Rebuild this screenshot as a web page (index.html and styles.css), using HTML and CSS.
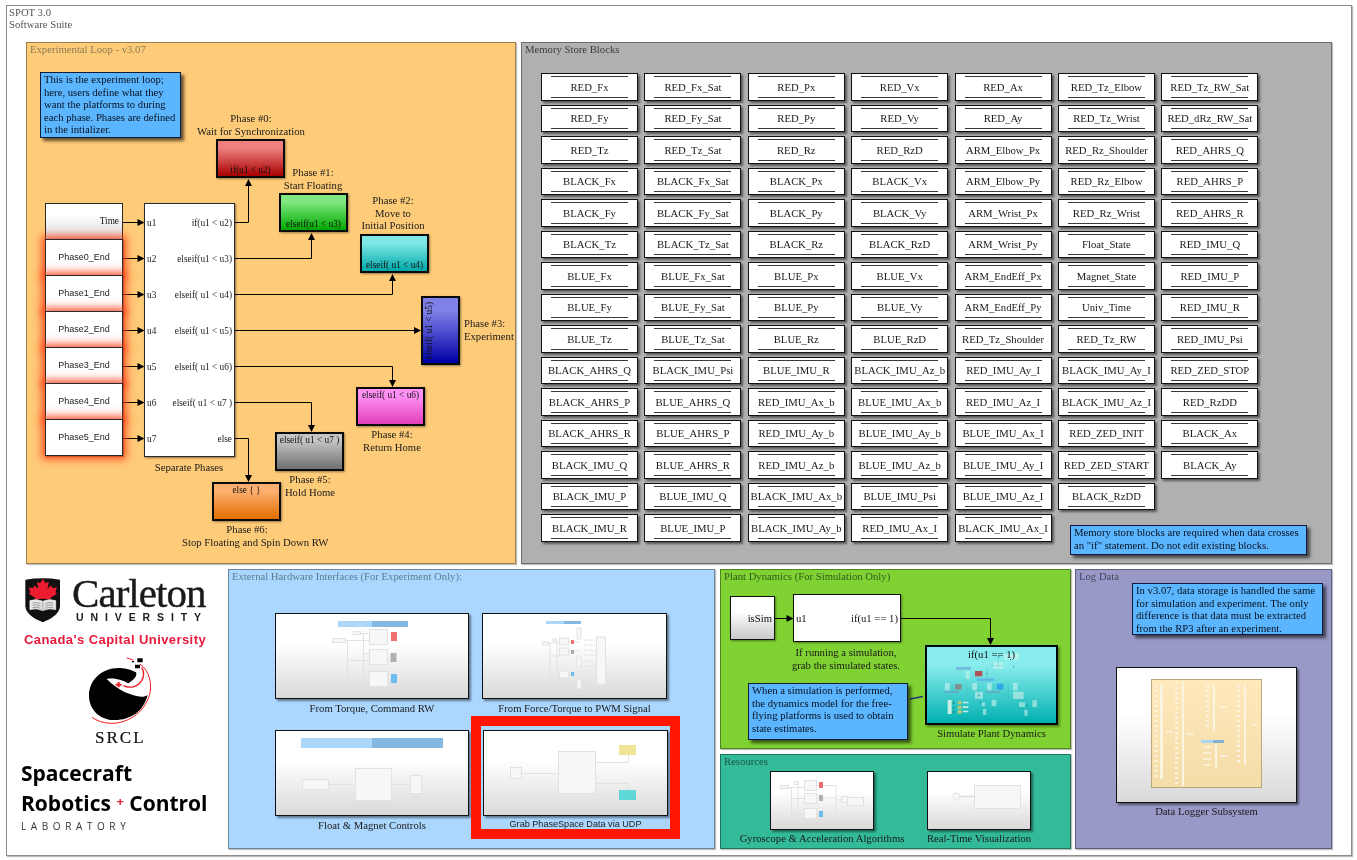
FILE: index.html
```html
<!DOCTYPE html>
<html lang="en">
<head>
<meta charset="utf-8">
<title>SPOT 3.0 Software Suite</title>
<link rel="stylesheet" href="styles.css">
</head>
<body>
<div class="frame">
  <div class="suite-title">SPOT 3.0<br>Software Suite</div>

  <div class="row-top">
    <section class="panel loop">
      <div class="ptitle">Experimental Loop - v3.07</div>
      <svg class="wires" width="490" height="522" viewBox="0 0 490 522">
        <g transform="translate(-26 -42)">
          <path class="wire" d="M122 222.5H138M122 258.5H138M122 294.5H138M122 330.5H138M122 366.5H138M122 402.5H138M122 438.5H138"/>
          <path class="arrow" d="M144.500 222.500l-7-3.500v7zM144.500 258.500l-7-3.500v7zM144.500 294.500l-7-3.500v7zM144.500 330.500l-7-3.500v7zM144.500 366.500l-7-3.500v7zM144.500 402.500l-7-3.500v7zM144.500 438.500l-7-3.500v7z"/>
          <path class="wire" d="M235 222.500H248.500V185M235 258.500H311.500V239M235 294.500H392.500V280M235 330.500H415M235 366.500H392.500V381M235 402.500H311.500V426M235 438.500H248.500V476"/>
          <path class="arrow" d="M248.500 179l-3.500 7h7zM311.500 233l-3.500 7h7zM392.500 274l-3.500 7h7zM421 330.500l-7-3.500v7zM392.500 387l-3.500-7h7zM311.500 432l-3.500-7h7zM248.500 482l-3.500-7h7z"/>
        </g>
      </svg>

      <div class="note note-loop">This is the experiment loop;<br>here, users define what they<br>want the platforms to during<br>each phase. Phases are defined<br>in the intializer.</div>

      <div class="stack">
        <div class="inport inport-time">Time</div>
        <div class="inport inport-phase">Phase0_End</div>
        <div class="inport inport-phase">Phase1_End</div>
        <div class="inport inport-phase">Phase2_End</div>
        <div class="inport inport-phase">Phase3_End</div>
        <div class="inport inport-phase">Phase4_End</div>
        <div class="inport inport-phase">Phase5_End</div>
      </div>

      <div class="ifblock">
        <div class="port"><span>u1</span><span>if(u1 &lt; u2)</span></div>
        <div class="port"><span>u2</span><span>elseif(u1 &lt; u3)</span></div>
        <div class="port"><span>u3</span><span>elseif( u1 &lt; u4)</span></div>
        <div class="port"><span>u4</span><span>elseif( u1 &lt; u5)</span></div>
        <div class="port"><span>u5</span><span>elseif( u1 &lt; u6)</span></div>
        <div class="port"><span>u6</span><span>elseif( u1 &lt; u7 )</span></div>
        <div class="port"><span>u7</span><span>else</span></div>
      </div>
      <div class="lbl l-sep">Separate Phases</div>

      <div class="lbl l0">Phase #0:<br>Wait for Synchronization</div>
      <div class="sub sub-bottom p0">if(u1 &lt; u2)</div>
      <div class="lbl l1">Phase #1:<br>Start Floating</div>
      <div class="sub sub-bottom p1">elseif(u1 &lt; u3)</div>
      <div class="lbl l2">Phase #2:<br>Move to<br>Initial Position</div>
      <div class="sub sub-bottom p2">elseif( u1 &lt; u4)</div>
      <div class="sub p3"><span class="vtext">elseif( u1 &lt; u5)</span></div>
      <div class="lbl l3">Phase #3:<br>Experiment</div>
      <div class="sub sub-top p4">elseif( u1 &lt; u6)</div>
      <div class="lbl l4">Phase #4:<br>Return Home</div>
      <div class="sub sub-top p5">elseif( u1 &lt; u7 )</div>
      <div class="lbl l5">Phase #5:<br>Hold Home</div>
      <div class="sub sub-top p6">else { }</div>
      <div class="lbl l6">Phase #6:<br>Stop Floating and Spin Down RW</div>
    </section>

    <section class="panel memory">
      <div class="ptitle">Memory Store Blocks</div>
      <div class="ds-grid">
        <div class="ds">RED_Fx</div><div class="ds">RED_Fy</div><div class="ds">RED_Tz</div><div class="ds">BLACK_Fx</div><div class="ds">BLACK_Fy</div><div class="ds">BLACK_Tz</div><div class="ds">BLUE_Fx</div><div class="ds">BLUE_Fy</div><div class="ds">BLUE_Tz</div><div class="ds">BLACK_AHRS_Q</div><div class="ds">BLACK_AHRS_P</div><div class="ds">BLACK_AHRS_R</div><div class="ds">BLACK_IMU_Q</div><div class="ds">BLACK_IMU_P</div><div class="ds">BLACK_IMU_R</div>
        <div class="ds">RED_Fx_Sat</div><div class="ds">RED_Fy_Sat</div><div class="ds">RED_Tz_Sat</div><div class="ds">BLACK_Fx_Sat</div><div class="ds">BLACK_Fy_Sat</div><div class="ds">BLACK_Tz_Sat</div><div class="ds">BLUE_Fx_Sat</div><div class="ds">BLUE_Fy_Sat</div><div class="ds">BLUE_Tz_Sat</div><div class="ds">BLACK_IMU_Psi</div><div class="ds">BLUE_AHRS_Q</div><div class="ds">BLUE_AHRS_P</div><div class="ds">BLUE_AHRS_R</div><div class="ds">BLUE_IMU_Q</div><div class="ds">BLUE_IMU_P</div>
        <div class="ds">RED_Px</div><div class="ds">RED_Py</div><div class="ds">RED_Rz</div><div class="ds">BLACK_Px</div><div class="ds">BLACK_Py</div><div class="ds">BLACK_Rz</div><div class="ds">BLUE_Px</div><div class="ds">BLUE_Py</div><div class="ds">BLUE_Rz</div><div class="ds">BLUE_IMU_R</div><div class="ds">RED_IMU_Ax_b</div><div class="ds">RED_IMU_Ay_b</div><div class="ds">RED_IMU_Az_b</div><div class="ds">BLACK_IMU_Ax_b</div><div class="ds">BLACK_IMU_Ay_b</div>
        <div class="ds">RED_Vx</div><div class="ds">RED_Vy</div><div class="ds">RED_RzD</div><div class="ds">BLACK_Vx</div><div class="ds">BLACK_Vy</div><div class="ds">BLACK_RzD</div><div class="ds">BLUE_Vx</div><div class="ds">BLUE_Vy</div><div class="ds">BLUE_RzD</div><div class="ds">BLACK_IMU_Az_b</div><div class="ds">BLUE_IMU_Ax_b</div><div class="ds">BLUE_IMU_Ay_b</div><div class="ds">BLUE_IMU_Az_b</div><div class="ds">BLUE_IMU_Psi</div><div class="ds">RED_IMU_Ax_I</div>
        <div class="ds">RED_Ax</div><div class="ds">RED_Ay</div><div class="ds">ARM_Elbow_Px</div><div class="ds">ARM_Elbow_Py</div><div class="ds">ARM_Wrist_Px</div><div class="ds">ARM_Wrist_Py</div><div class="ds">ARM_EndEff_Px</div><div class="ds">ARM_EndEff_Py</div><div class="ds">RED_Tz_Shoulder</div><div class="ds">RED_IMU_Ay_I</div><div class="ds">RED_IMU_Az_I</div><div class="ds">BLUE_IMU_Ax_I</div><div class="ds">BLUE_IMU_Ay_I</div><div class="ds">BLUE_IMU_Az_I</div><div class="ds">BLACK_IMU_Ax_I</div>
        <div class="ds">RED_Tz_Elbow</div><div class="ds">RED_Tz_Wrist</div><div class="ds">RED_Rz_Shoulder</div><div class="ds">RED_Rz_Elbow</div><div class="ds">RED_Rz_Wrist</div><div class="ds">Float_State</div><div class="ds">Magnet_State</div><div class="ds">Univ_Time</div><div class="ds">RED_Tz_RW</div><div class="ds">BLACK_IMU_Ay_I</div><div class="ds">BLACK_IMU_Az_I</div><div class="ds">RED_ZED_INIT</div><div class="ds">RED_ZED_START</div><div class="ds">BLACK_RzDD</div><div class="ds-empty"></div>
        <div class="ds">RED_Tz_RW_Sat</div><div class="ds">RED_dRz_RW_Sat</div><div class="ds">RED_AHRS_Q</div><div class="ds">RED_AHRS_P</div><div class="ds">RED_AHRS_R</div><div class="ds">RED_IMU_Q</div><div class="ds">RED_IMU_P</div><div class="ds">RED_IMU_R</div><div class="ds">RED_IMU_Psi</div><div class="ds">RED_ZED_STOP</div><div class="ds">RED_RzDD</div><div class="ds">BLACK_Ax</div><div class="ds">BLACK_Ay</div>
      </div>
      <div class="note note-memory">Memory store blocks are required when data crosses<br>an "if" statement. Do not edit existing blocks.</div>
    </section>
  </div>

  <div class="row-bottom">
    <div class="logos">
      <div class="carleton">
        <svg class="shield" width="37" height="46" viewBox="10 12 112 138">
          <path fill="#111" d="M14 20Q66 11 119 20V100Q116 130 67 148Q17 130 14 100Z"/>
          <path fill="#ed1c2e" d="M67 17L75 30L85 26L81 47L92 37L96 45L110 43L105 58L110 62L90 74L92 80L70 77L64 77L42 80L44 74L24 62L29 58L24 43L38 45L42 37L53 47L49 26L59 30Z"/>
          <path fill="#e4e4e4" stroke="#fff" stroke-width="2" d="M28 83Q48 76 67 85Q86 76 106 83V110Q86 104 67 113Q48 104 28 110Z"/>
          <path fill="none" stroke="#777" stroke-width="2" d="M67 85V112M36 90Q50 87 60 92M36 97Q50 94 60 99M36 104Q50 101 60 106M74 92Q84 87 98 90M74 99Q84 94 98 97M74 106Q84 101 98 104"/>
        </svg>
        <div class="wordmark">
          <div class="carleton-word">Carleton</div>
          <div class="university-word">UNIVERSITY</div>
        </div>
      </div>
      <div class="capital">Canada's Capital University</div>
      <svg class="srcl-mark" width="80" height="70" viewBox="0 0 240 210">
        <path fill="#000" d="M115 42C70 42 27 75 27 125C27 170 65 200 105 198C150 197 190 175 203 122C190 135 160 125 135 115C115 105 95 90 80 75C105 70 130 80 145 88C165 75 172 65 168 55C150 45 130 42 115 42Z"/>
        <path fill="none" stroke="#ed1c24" stroke-width="3" d="M36 190C50 200 70 208 95 208C140 208 190 180 208 125C218 90 208 50 180 30M160 18L140 12"/>
        <path fill="none" stroke="#ed1c24" stroke-width="4" d="M130 95C150 104 172 100 185 80C192 68 192 52 185 40"/>
        <path fill="#ed1c24" d="M113 84h6v5h6v6h-6v5h-6v-5h-6v-6h6z"/>
        <path fill="#000" d="M172 13h16v12h-16zM165 32h15v11h-15zM156 21h6v4h-6z"/>
      </svg>
      <div class="srcl-word">SRCL</div>
      <div class="lab-line lab-first">Spacecraft</div>
      <div class="lab-line">Robotics <span class="lab-plus">+</span> Control</div>
      <div class="lab-sub">LABORATORY</div>
    </div>

    <section class="panel hardware">
      <div class="ptitle">External Hardware Interfaces (For Experiment Only):</div>

      <figure class="fig f-torque">
        <div class="thumb thumb-hw">
          <svg class="thumb-art" width="194" height="86" viewBox="0 0 194 86">
            <path fill="#abd7fb" d="M63 8h34v6h-34z"/><path fill="#85b8e0" d="M97 8h36v6h-36z"/>
            <path class="ln" d="M70 27.500H94M72.500 27.500V69.500H94M72.500 47.500H94M88.500 20V62M85 20.500H94M88 40.500H94M88 62.500H94"/>
            <rect class="pale" x="57.500" y="25.500" width="13" height="4"/><rect class="pale" x="78.500" y="18.500" width="7" height="3"/>
            <rect class="pale" x="94.500" y="16.500" width="18" height="15"/><rect class="pale" x="94.500" y="36.500" width="18" height="15"/><rect class="pale" x="94.500" y="58.500" width="18" height="15"/>
            <path fill="#f07070" d="M116 19h6v9h-6z"/><path fill="#b0b0b0" d="M115.500 40h6v9h-6z"/><path fill="#70bcf0" d="M116 61h6v9h-6z"/>
          </svg>
        </div>
        <figcaption class="cap">From Torque, Command RW</figcaption>
      </figure>

      <figure class="fig f-pwm">
        <div class="thumb thumb-hw">
          <svg class="thumb-art" width="185" height="86" viewBox="0 0 185 86">
            <path fill="#abd7fb" d="M64 8h18v3h-18z"/><path fill="#85b8e0" d="M82 8h17v3h-17z"/>
            <path class="ln" d="M67 30H78M68 30.500V63H78M67.500 43H78M75 27V59H78M87 29H97M87 38H97M87 60H97"/>
            <rect class="pale" x="60.500" y="29" width="6" height="3"/><rect class="pale" x="70.500" y="26" width="4" height="2"/>
            <rect class="pale" x="77.500" y="25" width="9" height="7"/><rect class="pale" x="77.500" y="35" width="9" height="7"/><rect class="pale" x="77.500" y="58" width="9" height="7"/>
            <rect class="pale" x="114.500" y="24" width="9" height="47"/>
            <path fill="#f07070" d="M89 27h3v4h-3z"/><path fill="#aaa" d="M89 37h3v4h-3z"/><path fill="#70bcf0" d="M89 59h3v4h-3z"/>
            <path class="dash" d="M102 27H115M102 32H115M102 37H115M102 42H115M102 48H115M102 53H115M102 58H115M102 63H115M102 68H115"/>
            <path class="pale" d="M95 15h4v11h-4zM95 43h4v11h-4zM95 66h4v10h-4z"/>
          </svg>
        </div>
        <figcaption class="cap">From Force/Torque to PWM Signal</figcaption>
      </figure>

      <figure class="fig f-float">
        <div class="thumb thumb-hw">
          <svg class="thumb-art" width="194" height="86" viewBox="0 0 194 86">
            <path fill="#abd7fb" d="M26 8h71v10h-71z"/><path fill="#85b8e0" d="M97 8h71v10h-71z"/>
            <path class="ln" d="M53 54.500H80M116 54.500H135"/>
            <rect class="pale" x="27.500" y="49.500" width="26" height="10"/>
            <rect class="pale" x="80.500" y="38.500" width="36" height="32"/>
            <rect class="pale" x="135.500" y="45.500" width="11" height="18"/>
          </svg>
        </div>
        <figcaption class="cap">Float &amp; Magnet Controls</figcaption>
      </figure>

      <figure class="fig f-udp">
        <div class="thumb thumb-hw">
          <svg class="thumb-art" width="185" height="86" viewBox="0 0 185 86">
            <path class="ln" d="M38 43.500H75M113 32.500H145.500V25M113 53.500H145.500V60"/>
            <rect class="pale" x="27.500" y="37.500" width="11" height="11"/>
            <rect class="pale" x="75.500" y="21.500" width="37" height="42"/>
            <path fill="#f0e498" d="M136 15h17v10h-17z"/><path fill="#60d8d8" d="M136 60h17v10h-17z"/>
          </svg>
        </div>
        <figcaption class="cap cap-sans">Grab PhaseSpace Data via UDP</figcaption>
      </figure>
      <div class="highlight"></div>
    </section>

    <div class="middle">
      <section class="panel plant">
        <div class="ptitle">Plant Dynamics (For Simulation Only)</div>
        <div class="issim">isSim</div>
        <div class="ifsim"><span>u1</span><span>if(u1 == 1)</span></div>
        <div class="lbl l-ifsim">If running a simulation,<br>grab the simulated states.</div>
        <figure class="fig f-sim">
          <div class="simblock">
            <svg class="thumb-art sim-art" width="133" height="80" viewBox="0 0 399 240">
              <g transform="translate(-3 -3)">
                <path fill="#b05050" d="M150 78h22v16h-22z"/><path fill="#809090" d="M90 117h20v17h-20z"/><path fill="#30a8e8" d="M215 116h20v18h-20z"/>
                <path fill="#70bcdf" d="M92 66h46v8h-46z"/><path fill="#60b8e8" d="M155 100h52v8h-52z"/><path fill="#60b0c8" d="M58 138h44v6h-44zM182 138h44v6h-44z"/>
                <path class="sim-pale" d="M122 78h12v24h-12zM60 114h14v22h-14zM142 114h14v22h-14zM186 114h14v22h-14zM264 114h14v22h-14zM150 140h24v22h-24zM264 140h32v22h-32zM238 28h36v16h-36zM206 52h28v20h-28zM270 24h12v20h-12zM200 164h14v20h-14zM170 172h10v12h-10zM282 172h18v14h-18zM322 166h14v20h-14zM298 194h10v18h-10zM174 192h10v18h-10z"/>
                <path fill="#c8f0e8" d="M68 165h12v42h-12zM114 170h16v5h-16zM114 184h16v5h-16zM114 197h16v5h-16z"/>
                <path fill="#b0c878" d="M98 168h12v10h-12zM98 182h12v10h-12zM98 195h12v11h-12z"/>
                <path fill="#1a6a70" d="M84 172h4v4h-4zM84 186h4v4h-4zM84 199h4v4h-4zM160 150h3v3h-3zM165 172h3v3h-3zM220 34h3v3h-3zM255 42h3v3h-3zM184 84h3v3h-3zM304 180h3v3h-3zM264 64h3v3h-3z"/>
                <path class="sim-ln" d="M160 128V172M220 34V72M126 124V152M250 118V156M310 180V212M192 62H234M186 62V100M82 118V140M206 118V138"/>
              </g>
            </svg>
            <span class="sim-text">if(u1 == 1)</span>
          </div>
          <figcaption class="cap cap-sim">Simulate Plant Dynamics</figcaption>
        </figure>
        <svg class="wires" width="351" height="180" viewBox="0 0 351 180">
          <g transform="translate(-720 -569)">
            <path class="wire" d="M775 618.500H787M901 618.500H990.500V639"/>
            <path class="arrow" d="M793.500 618.500l-7-3.500v7zM990.500 645l-3.500-7h7z"/>
            <path class="tie" d="M910 699L923 696.500"/>
          </g>
        </svg>
        <div class="note note-plant">When a simulation is performed,<br>the dynamics model for the free-<br>flying platforms is used to obtain<br>state estimates.</div>
      </section>

      <section class="panel resources">
        <div class="ptitle">Resources</div>
        <figure class="fig f-gyro">
          <div class="thumb thumb-res">
            <svg class="thumb-art" width="104" height="59" viewBox="0 0 104 59">
              <path class="ln" d="M19 16.500H34M21.500 16V43.500H34M21.500 27.500H34M28 12V40M47 14.500H66V40M47 27H66M47 43.500H66M66 29H76"/>
              <rect class="pale" x="10.500" y="14.500" width="8" height="3"/><rect class="pale" x="24.500" y="10.500" width="4" height="3"/>
              <rect class="pale" x="34.500" y="9.500" width="12" height="10"/><rect class="pale" x="34.500" y="22.500" width="12" height="10"/><rect class="pale" x="34.500" y="37.500" width="12" height="10"/>
              <path fill="#e87070" d="M49 11h4v6h-4z"/><path fill="#b0b0b0" d="M49 24h4v6h-4z"/><path fill="#70bcf0" d="M49 40h4v6h-4z"/>
              <rect class="pale" x="71.500" y="25.500" width="6" height="6"/><rect class="pale" x="77.500" y="26.500" width="16" height="8"/>
            </svg>
          </div>
          <figcaption class="cap cap-res">Gyroscope &amp; Acceleration Algorithms</figcaption>
        </figure>
        <figure class="fig f-rt">
          <div class="thumb thumb-res">
            <svg class="thumb-art" width="104" height="59" viewBox="0 0 104 59">
              <path d="M33 25.500H48" stroke="#ddd" stroke-width="1.500"/>
              <circle class="pale" cx="29.500" cy="25.500" r="3.500"/>
              <rect class="pale" x="47.500" y="14.500" width="46" height="23"/>
            </svg>
          </div>
          <figcaption class="cap cap-res">Real-Time Visualization</figcaption>
        </figure>
      </section>
    </div>

    <section class="panel logdata">
      <div class="ptitle">Log Data</div>
      <div class="note note-log">In v3.07, data storage is handled the same<br>for simulation and experiment. The only<br>difference is that data must be extracted<br>from the RP3 after an experiment.</div>
      <figure class="fig f-logger">
        <div class="thumb thumb-log">
          <svg class="thumb-art" width="181" height="136" viewBox="0 0 181 136">
            <defs>
              <linearGradient id="tan" x1="0" y1="0" x2="0" y2="1"><stop offset="0" stop-color="#ffe9bd"/><stop offset="1" stop-color="#f3dca6"/></linearGradient>
            </defs>
            <rect x="35.500" y="12.500" width="110" height="108" fill="url(#tan)" stroke="#b8a880"/>
            <path fill="#fbf4e0" d="M44 18h3v94h-3zM66 15h2v104h-2zM97 18h2v46h-2zM128 18h2v80h-2zM99 77h2v24h-2z"/>
            <path class="tan-dash" d="M40 18V112M60.500 15V119M91.500 18V64M122.500 18V98"/>
            <path class="tan-out" d="M50 65H57M70 67H78M104 40H111M104 89H111M135 58H142M87 80H95M87 86H95M87 92H95M87 98H95"/>
            <path fill="#a8d5f0" d="M85 73h12v3h-12z"/><path fill="#85b0d0" d="M97 73h11v3h-11z"/>
          </svg>
        </div>
        <figcaption class="cap cap-log">Data Logger Subsystem</figcaption>
      </figure>
    </section>
  </div>
</div>
</body>
</html>
```

FILE: styles.css
```css
* { box-sizing: border-box; }

html, body { margin: 0; padding: 0; background: #fff; }

body {
  width: 1357px;
  height: 860px;
  overflow: hidden;
  font-family: "Liberation Serif", "Times New Roman", serif;
  font-size: 10.7px;
  line-height: 12.7px;
  color: #111;
}

.frame {
  margin: 5px 0 0 6px;
  width: 1346px;
  height: 851px;
  border: 1px solid #8c8c8c;
  box-shadow: 1px 1px 1px #bbb;
  display: grid;
  grid-template-rows: 31px 522px 280px;
  row-gap: 5px;
  padding-left: 19px;
  filter: blur(0.35px);
}

.suite-title { margin-left: -19px; padding-left: 2px; line-height: 12px; color: #555; }

.row-top { display: flex; gap: 5px; }
.row-bottom { display: flex; }

.panel {
  position: relative;
  box-shadow: inset 0 0 0 1px rgba(0, 0, 0, 0.38), 1px 1px 1px rgba(0, 0, 0, 0.25);
}
.ptitle { padding: 1px 0 0 4px; white-space: nowrap; }

.loop { width: 490px; background: #fecb78; }
.loop .ptitle { color: #8c7a52; }
.memory { width: 811px; background: #b0b0b0; }
.memory .ptitle { color: #3c3c3c; }
.hardware { width: 487px; margin-left: 5px; background: #abd7ff; }
.hardware .ptitle { color: #5c7c94; }
.middle { width: 351px; margin-left: 5px; display: flex; flex-direction: column; gap: 5px; }
.plant { height: 180px; background: #80d132; }
.plant .ptitle { color: #2f5c1c; }
.resources { height: 95px; background: #33bb99; }
.resources .ptitle { color: #1c5646; }
.logdata { width: 257px; margin-left: 4px; background: #9999c8; }
.logdata .ptitle { color: #454560; }

/* wiring */
.wires { position: absolute; left: 0; top: 0; pointer-events: none; }
.wire { fill: none; stroke: #000; stroke-width: 1; }
.arrow { fill: #000; }
.tie { fill: none; stroke: #24337a; stroke-width: 1.5; }

/* notes */
.note {
  position: absolute;
  background: #5cb6ff;
  border: 1px solid #0c1c3a;
  box-shadow: 3px 3px 3px rgba(0, 0, 0, 0.6);
  padding: 0 3px;
  line-height: 12.6px;
  white-space: nowrap;
  color: #06101e;
}
.note-loop { left: 14px; top: 30px; width: 141px; height: 66px; }
.note-memory { left: 549px; top: 483px; width: 237px; height: 30px; }
.note-plant { left: 28px; top: 114px; width: 160px; height: 57px; }
.note-log { left: 57px; top: 14px; width: 191px; height: 52px; }

/* free text labels of the diagram */
.lbl { position: absolute; width: 130px; text-align: center; white-space: nowrap; color: #1a1a1a; }
.l0 { left: 160px; top: 70px; }
.l1 { left: 222px; top: 124px; }
.l2 { left: 302px; top: 152px; }
.l3 { left: 438px; top: 275px; width: 60px; text-align: left; }
.l4 { left: 301px; top: 386px; }
.l5 { left: 219px; top: 431px; }
.l6 { left: 156px; top: 481px; width: 130px; }
.l-sep { left: 98px; top: 419px; }
.l-ifsim { left: 61px; top: 77px; }

/* left inports */
.stack { position: absolute; left: 19px; top: 161px; width: 78px; display: flex; flex-direction: column; }
.inport {
  height: 37px;
  margin-bottom: -1px;
  border: 1px solid #2a2a2a;
  background: #fff;
  display: flex;
  align-items: center;
}
.inport-time {
  justify-content: flex-end;
  padding: 0 3px 0 0;
  font-size: 9.3px;
  background: linear-gradient(#fff 30%, #dcdcdc 100%);
}
.inport-phase {
  justify-content: center;
  font-family: "Liberation Sans", Arial, sans-serif;
  font-size: 9px;
  color: #222;
  padding-bottom: 1px;
  box-shadow: 0 0 8px 3px rgba(255, 55, 20, 0.85), 1px 1px 1px rgba(0, 0, 0, 0.4);
}

/* if block */
.ifblock {
  position: absolute;
  left: 118px;
  top: 161px;
  width: 91px;
  height: 254px;
  padding-top: 1px;
  background: #fff;
  border: 1px solid #2a2a2a;
  box-shadow: 1px 1px 2px rgba(0, 0, 0, 0.45);
  font-size: 9.3px;
  color: #222;
}
.port { height: 36px; display: flex; align-items: center; justify-content: space-between; padding: 0 2px; white-space: nowrap; }

/* phase subsystems */
.sub {
  position: absolute;
  width: 69px;
  height: 39px;
  border: 2px solid #0a0a0a;
  box-shadow: 1px 1px 2px rgba(0, 0, 0, 0.4);
  display: flex;
  justify-content: center;
  font-size: 9.3px;
  white-space: nowrap;
  color: #111;
}
.sub-bottom { align-items: flex-end; line-height: 11px; }
.sub-top { align-items: flex-start; }
.p0 { left: 190px; top: 97px; background: linear-gradient(#f08080 20%, #a80000 100%); }
.p1 { left: 253px; top: 151px; background: linear-gradient(#80e880 20%, #00a800 100%); }
.p2 { left: 334px; top: 192px; background: linear-gradient(#80e8e8 20%, #00a8a8 100%); }
.p3 {
  left: 395px;
  top: 254px;
  width: 39px;
  height: 69px;
  justify-content: flex-start;
  align-items: center;
  background: linear-gradient(#8080e8 20%, #0000a8 100%);
}
.p4 { left: 330px; top: 345px; background: linear-gradient(#ff90f4 20%, #e040b8 100%); }
.p5 { left: 249px; top: 390px; background: linear-gradient(#c4c4c4 20%, #707070 100%); }
.p6 { left: 186px; top: 440px; background: linear-gradient(#ffb070 20%, #e06e00 100%); }
.vtext { writing-mode: vertical-rl; transform: rotate(180deg); }

/* memory store blocks */
.ds-grid {
  margin: 17.3px 0 0 20px;
  display: grid;
  grid-template-rows: repeat(15, 27.5px);
  grid-auto-flow: column;
  grid-auto-columns: 97px;
  column-gap: 6.4px;
  row-gap: 4px;
}
.ds {
  position: relative;
  display: flex;
  align-items: center;
  justify-content: center;
  padding-top: 1px;
  background: #fff;
  border: 1px solid #111;
  box-shadow: 2px 2px 2px rgba(0, 0, 0, 0.5);
  white-space: nowrap;
  color: #1a1a1a;
}
.ds::before,
.ds::after {
  content: "";
  position: absolute;
  left: 9px;
  right: 9px;
  height: 1px;
  background: #3a3a3a;
}
.ds::before { top: 2px; }
.ds::after { bottom: 2px; }

/* thumbnails */
.fig { position: absolute; margin: 0; display: flex; flex-direction: column; align-items: center; }
.thumb {
  position: relative;
  width: 100%;
  border: 1px solid #111;
  background: linear-gradient(#fff 35%, #d9d9d9 100%);
  box-shadow: 2px 2px 2px rgba(0, 0, 0, 0.45);
}
.thumb-hw { height: 86px; }
.thumb-res { height: 59px; }
.thumb-log { height: 136px; }
.thumb-art { position: absolute; left: -1px; top: -1px; }
.pale { fill: #f7f7f7; stroke: #e2e2e2; stroke-width: 1; }
.ln { fill: none; stroke: #e2e2e2; stroke-width: 1; }
.dash { fill: none; stroke: #e4e4e4; stroke-width: 1; stroke-dasharray: 4 1; }
.cap { margin-top: 3px; white-space: nowrap; color: #1a1a1a; }
.cap-sans { font-family: "Liberation Sans", Arial, sans-serif; font-size: 9.1px; margin-top: 2px; }
.cap-sim { margin-top: 1.5px; }
.cap-res { margin-top: 2px; }
.cap-log { margin-top: 2px; }
.f-torque { left: 47px; top: 44px; width: 194px; }
.f-pwm { left: 254px; top: 44px; width: 185px; }
.f-float { left: 47px; top: 161px; width: 194px; }
.f-udp { left: 255px; top: 161px; width: 185px; }
.f-sim { left: 205px; top: 76px; width: 133px; }
.f-gyro { left: 50px; top: 17px; width: 104px; }
.f-rt { left: 207px; top: 17px; width: 104px; }
.f-logger { left: 41px; top: 98px; width: 181px; }
.highlight { position: absolute; left: 243px; top: 147px; width: 209px; height: 123px; border: 10px solid #ff1500; }

/* plant blocks */
.issim {
  position: absolute;
  left: 10px;
  top: 27px;
  width: 45px;
  height: 44px;
  border: 1px solid #111;
  background: linear-gradient(#fff 35%, #c8c8c8 100%);
  box-shadow: 1px 1px 2px rgba(0, 0, 0, 0.4);
  display: flex;
  align-items: center;
  justify-content: flex-end;
  padding-right: 2px;
}
.ifsim {
  position: absolute;
  left: 73px;
  top: 25px;
  width: 108px;
  height: 48px;
  border: 1px solid #111;
  background: #fff;
  box-shadow: 1px 1px 2px rgba(0, 0, 0, 0.4);
  display: flex;
  align-items: center;
  justify-content: space-between;
  padding: 0 2px;
}
.simblock {
  position: relative;
  width: 133px;
  height: 80px;
  border: 2px solid #050505;
  background: linear-gradient(#88ecec 25%, #00b0b0 100%);
  box-shadow: 2px 2px 2px rgba(0, 0, 0, 0.35);
  display: flex;
  justify-content: center;
}
.sim-text { position: relative; padding-top: 1px; }
.sim-pale { fill: #d8f4ee; fill-opacity: 0.55; }
.sim-ln { fill: none; stroke: #3aa0a0; stroke-width: 1; stroke-opacity: 0.7; }

/* data logger art */
.tan-dash { fill: none; stroke: #fbf4e0; stroke-width: 3; stroke-dasharray: 2 3; }
.tan-out { fill: none; stroke: #fbf4e0; stroke-width: 1.5; }

/* logos */
.logos { width: 197px; position: relative; }
.carleton { display: flex; gap: 11px; margin: 7px 0 0 -2px; }
.shield { flex: none; margin-top: 1px; }
.wordmark { display: flex; flex-direction: column; margin-top: -1px; }
.carleton-word {
  font-size: 41px;
  line-height: 36px;
  letter-spacing: -0.95px;
  color: #1a1a1a;
  -webkit-text-stroke: 0.4px #1a1a1a;
  white-space: nowrap;
}
.university-word {
  font-family: "Liberation Sans", Arial, sans-serif;
  font-weight: 700;
  font-size: 10.5px;
  line-height: 10px;
  letter-spacing: 6.9px;
  margin: 1px 0 0 4px;
  color: #1a1a1a;
  white-space: nowrap;
}
.capital {
  margin: 9px 0 0 -2px;
  font-family: "Liberation Sans", Arial, sans-serif;
  font-weight: 700;
  font-size: 13px;
  line-height: 15px;
  letter-spacing: 0.42px;
  color: #e8193a;
  white-space: nowrap;
}
.srcl-mark { display: block; margin: 7px 0 0 54px; }
.srcl-word {
  margin: 5px 0 0 69px;
  font-size: 17px;
  line-height: 18px;
  letter-spacing: 2px;
  color: #111;
  -webkit-text-stroke: 0.2px #111;
}
.lab-line {
  font-family: "Open Sans", sans-serif;
  font-weight: 700;
  font-size: 21px;
  line-height: 30px;
  color: #000;
  white-space: nowrap;
  margin-left: -5px;
}
.lab-first { margin-top: 11px; }
.lab-plus { color: #e8193a; font-size: 13px; line-height: 0; vertical-align: 5px; }
.lab-sub {
  font-family: "Open Sans", sans-serif;
  font-size: 10px;
  line-height: 12px;
  letter-spacing: 4.6px;
  color: #333;
  margin: 2px 0 0 -5px;
  white-space: nowrap;
}
```
